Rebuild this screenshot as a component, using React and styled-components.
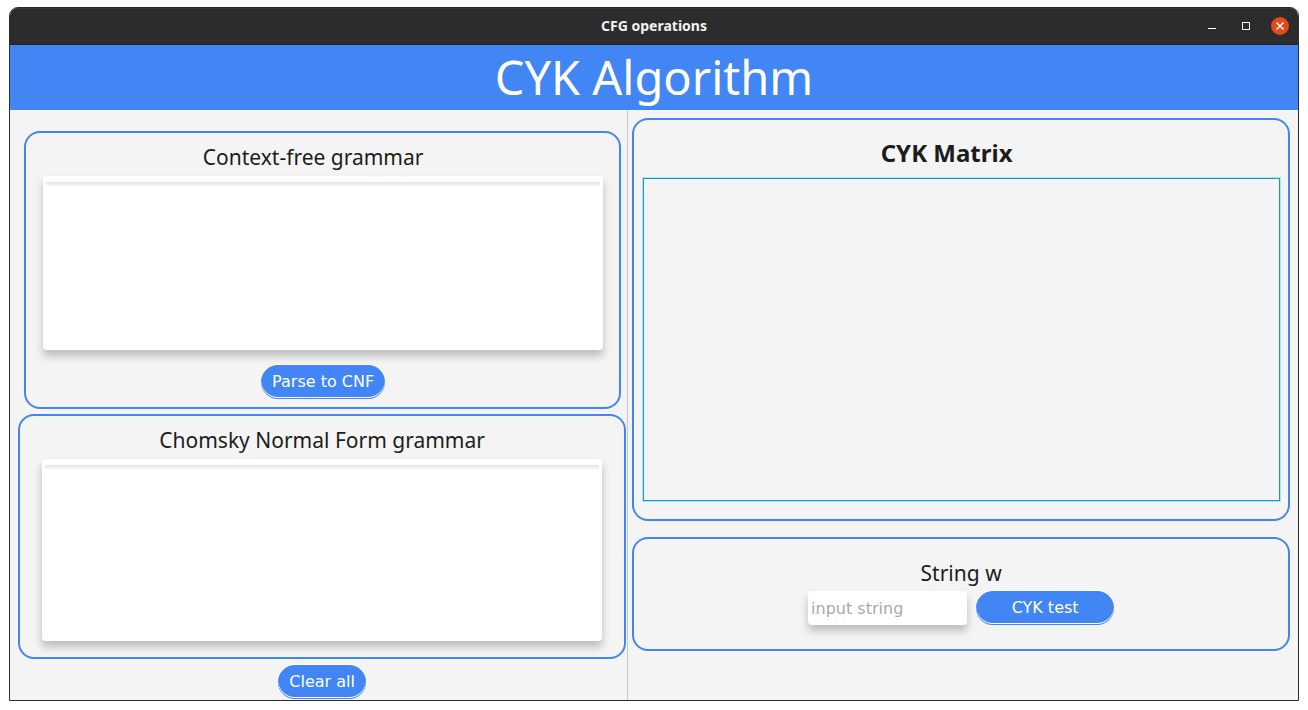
import React from "react";
import styled, { createGlobalStyle } from "styled-components";

const blue = "#4285f4";
const surface = "#f4f4f4";
const frame = "#2c2c2c";
const displayFont = '"Noto Sans", "Open Sans", sans-serif';
const controlFont = '"DejaVu Sans", sans-serif';

const GlobalStyle = createGlobalStyle`
  * { box-sizing: border-box; }
  body {
    margin: 0;
    background: #fff;
    color: #1c1c1c;
    font-family: ${displayFont};
  }
`;

const Window = styled.div`
  display: flex;
  flex-direction: column;
  min-height: calc(100vh - 16px);
  margin: 7px 9px 9px;
  border: 1px solid ${frame};
  border-radius: 9px 9px 0 0;
  background: ${surface};
  overflow: hidden;
`;

const TitleBar = styled.header`
  display: grid;
  grid-template-columns: 1fr auto 1fr;
  align-items: center;
  height: 37px;
  padding: 0 9px;
  background: ${frame};
  border-bottom: 1px solid #232323;
  box-shadow: inset 0 1px 0 #383838;
`;

const WindowTitle = styled.span`
  grid-column: 2;
  color: #f4f2ee;
  font-size: 14px;
  font-weight: 700;
  line-height: 20px;
`;

const WindowControls = styled.div`
  display: flex;
  justify-content: flex-end;
  gap: 16px;
`;

const WindowButton = styled.button`
  width: 18px;
  height: 18px;
  padding: 0;
  border: 0;
  border-radius: 50%;
  background: ${(p) => (p.$accent ? "#e24a17" : "transparent")};

  svg { display: block; }
`;

const Banner = styled.h1`
  margin: 0;
  background: ${blue};
  color: #fff;
  font-size: 47px;
  font-weight: 400;
  line-height: 65px;
  text-align: center;
`;

const Columns = styled.main`
  display: grid;
  grid-template-columns: 48% minmax(0, 1fr);
  flex: 1;
`;

const GrammarColumn = styled.section`
  display: flex;
  flex-direction: column;
  gap: 5px;
  padding: 21px 1px 1px 8px;
  border-right: 1px solid #c8c8c8;
`;

const MatrixColumn = styled.section`
  display: flex;
  flex-direction: column;
  gap: 16px;
  padding: 8px 8px 8px 4px;
`;

const Panel = styled.div`
  display: flex;
  flex-direction: column;
  padding: ${(p) => p.$padding};
  margin: ${(p) => (p.$inset ? "0 5px 0 6px" : "0")};
  border: 2px solid ${blue};
  border-radius: 16px;
`;

const FieldLabel = styled.label`
  padding-right: ${(p) => (p.$shifted ? "20px" : "0")};
  font-size: 21px;
  line-height: 30px;
  text-align: center;
`;

const MatrixTitle = styled.h2`
  margin: 0;
  padding-right: 30px;
  font-size: 24px;
  font-weight: 700;
  line-height: 30px;
  text-align: center;
`;

const GrammarArea = styled.textarea`
  display: block;
  width: 100%;
  height: ${(p) => (p.$tall ? "182px" : "174px")};
  margin-top: 4px;
  padding: 8px;
  border: 0;
  border-radius: 4px;
  outline: 0;
  resize: none;
  background: linear-gradient(#e2e2e2, #fff) center 6px / calc(100% - 6px) 5px no-repeat #fff;
  box-shadow: 0 6px 8px rgba(0, 0, 0, 0.23);
  font: 16px ${controlFont};
`;

const PillButton = styled.button`
  align-self: center;
  height: 34px;
  min-width: ${(p) => (p.$wide ? "138px" : "0")};
  padding: 0 11px 1px;
  border: 0;
  border-radius: 17px;
  background: ${blue};
  box-shadow: inset 0 -1px 0 ${blue}, inset 0 -2px 0 #fff, 0 -1px 0 #fff;
  color: #fff;
  font: 16px/32px ${controlFont};
`;

const GrammarAction = styled(PillButton)`
  margin-top: 15px;
`;

const ClearAction = styled(PillButton)`
  margin-top: 1px;
`;

const Matrix = styled.div`
  height: 323px;
  margin-top: 10px;
  border: 1px solid #039ed3;
  box-shadow: 0 0 0 1px rgba(3, 158, 211, 0.25);
`;

const TestRow = styled.form`
  display: flex;
  align-items: center;
  justify-content: center;
  gap: 9px;
  margin-top: 3px;
`;

const StringInput = styled.input`
  width: 159px;
  height: 34px;
  padding: 0 3px;
  border: 0;
  border-radius: 4px;
  outline: 0;
  background: #fff;
  box-shadow: 0 6px 8px rgba(0, 0, 0, 0.23);
  font: 16px ${controlFont};

  &::placeholder { color: #aaa; opacity: 1; }
`;

function ControlIcon({ children }) {
  return (
    <svg width="18" height="18" viewBox="0 0 18 18" fill="none" stroke="#fff" aria-hidden="true">
      {children}
    </svg>
  );
}

export default function App() {
  return (
    <>
      <GlobalStyle />
      <Window>
        <TitleBar>
          <WindowTitle>CFG operations</WindowTitle>
          <WindowControls>
            <WindowButton type="button" aria-label="Minimize">
              <ControlIcon><path d="M5 11.5h8" /></ControlIcon>
            </WindowButton>
            <WindowButton type="button" aria-label="Maximize">
              <ControlIcon><path d="M5.500 5.500h7v7h-7z" /></ControlIcon>
            </WindowButton>
            <WindowButton type="button" aria-label="Close" $accent>
              <ControlIcon><path d="M5.500 5.500l7 7M12.500 5.500l-7 7" strokeWidth="1.500" /></ControlIcon>
            </WindowButton>
          </WindowControls>
        </TitleBar>
        <Banner>CYK Algorithm</Banner>
        <Columns>
          <GrammarColumn>
            <Panel $inset $padding="9px 16px 8px 17px">
              <FieldLabel htmlFor="cfg" $shifted>Context-free grammar</FieldLabel>
              <GrammarArea id="cfg" />
              <GrammarAction type="button">Parse to CNF</GrammarAction>
            </Panel>
            <Panel $padding="9px 22px 16px">
              <FieldLabel htmlFor="cnf">Chomsky Normal Form grammar</FieldLabel>
              <GrammarArea id="cnf" $tall readOnly />
            </Panel>
            <ClearAction type="button">Clear all</ClearAction>
          </GrammarColumn>
          <MatrixColumn>
            <Panel $padding="18px 8px 18px 9px">
              <MatrixTitle>CYK Matrix</MatrixTitle>
              <Matrix />
            </Panel>
            <Panel $padding="19px 8px 24px">
              <FieldLabel htmlFor="word">String w</FieldLabel>
              <TestRow onSubmit={(e) => e.preventDefault()}>
                <StringInput id="word" type="text" placeholder="input string" />
                <PillButton type="submit" $wide>CYK test</PillButton>
              </TestRow>
            </Panel>
          </MatrixColumn>
        </Columns>
      </Window>
    </>
  );
}
